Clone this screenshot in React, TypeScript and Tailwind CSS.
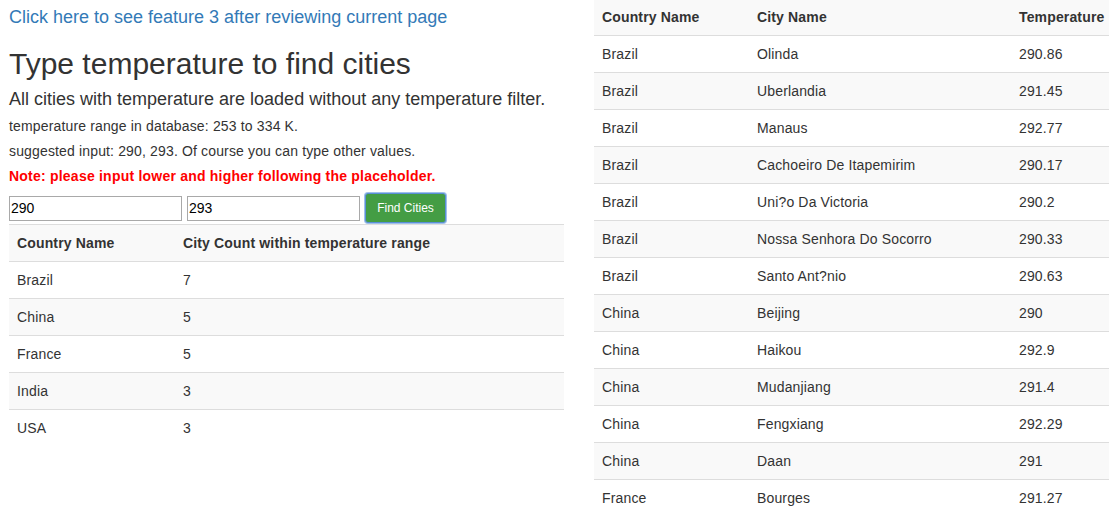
import React from "react";

const leftRows: [string, string][] = [
  ["Brazil", "7"],
  ["China", "5"],
  ["France", "5"],
  ["India", "3"],
  ["USA", "3"],
];

const rightRows: [string, string, string][] = [
  ["Brazil", "Olinda", "290.86"],
  ["Brazil", "Uberlandia", "291.45"],
  ["Brazil", "Manaus", "292.77"],
  ["Brazil", "Cachoeiro De Itapemirim", "290.17"],
  ["Brazil", "Uni?o Da Victoria", "290.2"],
  ["Brazil", "Nossa Senhora Do Socorro", "290.33"],
  ["Brazil", "Santo Ant?nio", "290.63"],
  ["China", "Beijing", "290"],
  ["China", "Haikou", "292.9"],
  ["China", "Mudanjiang", "291.4"],
  ["China", "Fengxiang", "292.29"],
  ["China", "Daan", "291"],
  ["France", "Bourges", "291.27"],
];

export default function App() {
  return (
    <div className="h-[512px] overflow-hidden flex bg-white text-[#333] text-[14px] leading-[20px] tracking-[0.15px] font-['Liberation_Sans',Arial,sans-serif]">
      <div className="w-[555px] ml-[9px] shrink-0">
        <div className="pt-[7px]">
          <a href="#" className="text-[18px] leading-[20px] tracking-normal text-[#337ab7] no-underline">
            Click here to see feature 3 after reviewing current page
          </a>
        </div>
        <h2 className="mt-[19px] text-[30px] leading-[33px] tracking-normal font-normal">Type temperature to find cities</h2>
        <h4 className="mt-[9px] text-[18px] leading-[20px] tracking-normal font-normal">
          All cities with temperature are loaded without any temperature filter.
        </h4>
        <p className="mt-[7px]">temperature range in database: 253 to 334 K.</p>
        <p className="mt-[5px]">suggested input: 290, 293. Of course you can type other values.</p>
        <p className="mt-[5px] font-bold tracking-[0.22px] text-[#ff0000]">Note: please input lower and higher following the placeholder.</p>
        <div className="mt-[7px] flex items-center gap-[5px]">
          <input
            defaultValue="290"
            placeholder="lower"
            className="w-[173px] h-[25px] border border-[#a9a9a9] px-[1px] text-[14px] tracking-normal text-black outline-none font-['Liberation_Sans',Arial,sans-serif]"
          />
          <input
            defaultValue="293"
            placeholder="higher"
            className="w-[173px] h-[25px] border border-[#a9a9a9] px-[1px] text-[14px] tracking-normal text-black outline-none font-['Liberation_Sans',Arial,sans-serif]"
          />
          <button className="w-[81px] h-[30px] rounded-[3px] bg-[#449d44] border border-[#5b8fd6] text-white text-[12px] leading-[18px] tracking-normal shadow-[0_0_0_1px_#9ec0ea]">
            Find Cities
          </button>
        </div>
        <table className="w-full border-collapse table-fixed mt-[1px]">
          <colgroup>
            <col className="w-[166px]" />
            <col />
          </colgroup>
          <tbody>
            <tr className="bg-[#f9f9f9]">
              <th className="text-left font-bold p-2 border-t border-[#ddd]">Country Name</th>
              <th className="text-left font-bold p-2 border-t border-[#ddd]">City Count within temperature range</th>
            </tr>
            {leftRows.map(([c, n], i) => (
              <tr key={c} className={i % 2 === 1 ? "bg-[#f9f9f9]" : ""}>
                <td className="p-2 border-t border-[#ddd]">{c}</td>
                <td className="p-2 border-t border-[#ddd]">{n}</td>
              </tr>
            ))}
          </tbody>
        </table>
      </div>
      <div className="w-[515px] ml-[30px] shrink-0">
        <table className="w-full border-collapse table-fixed">
          <colgroup>
            <col className="w-[155px]" />
            <col className="w-[262px]" />
            <col />
          </colgroup>
          <tbody>
            <tr className="bg-[#f9f9f9]">
              <th className="text-left font-bold px-2 pt-[7px] pb-2">Country Name</th>
              <th className="text-left font-bold px-2 pt-[7px] pb-2">City Name</th>
              <th className="text-left font-bold px-2 pt-[7px] pb-2">Temperature</th>
            </tr>
            {rightRows.map(([c, city, t], i) => (
              <tr key={city} className={i % 2 === 1 ? "bg-[#f9f9f9]" : ""}>
                <td className="p-2 border-t border-[#ddd]">{c}</td>
                <td className="p-2 border-t border-[#ddd]">{city}</td>
                <td className="p-2 border-t border-[#ddd]">{t}</td>
              </tr>
            ))}
          </tbody>
        </table>
      </div>
    </div>
  );
}
